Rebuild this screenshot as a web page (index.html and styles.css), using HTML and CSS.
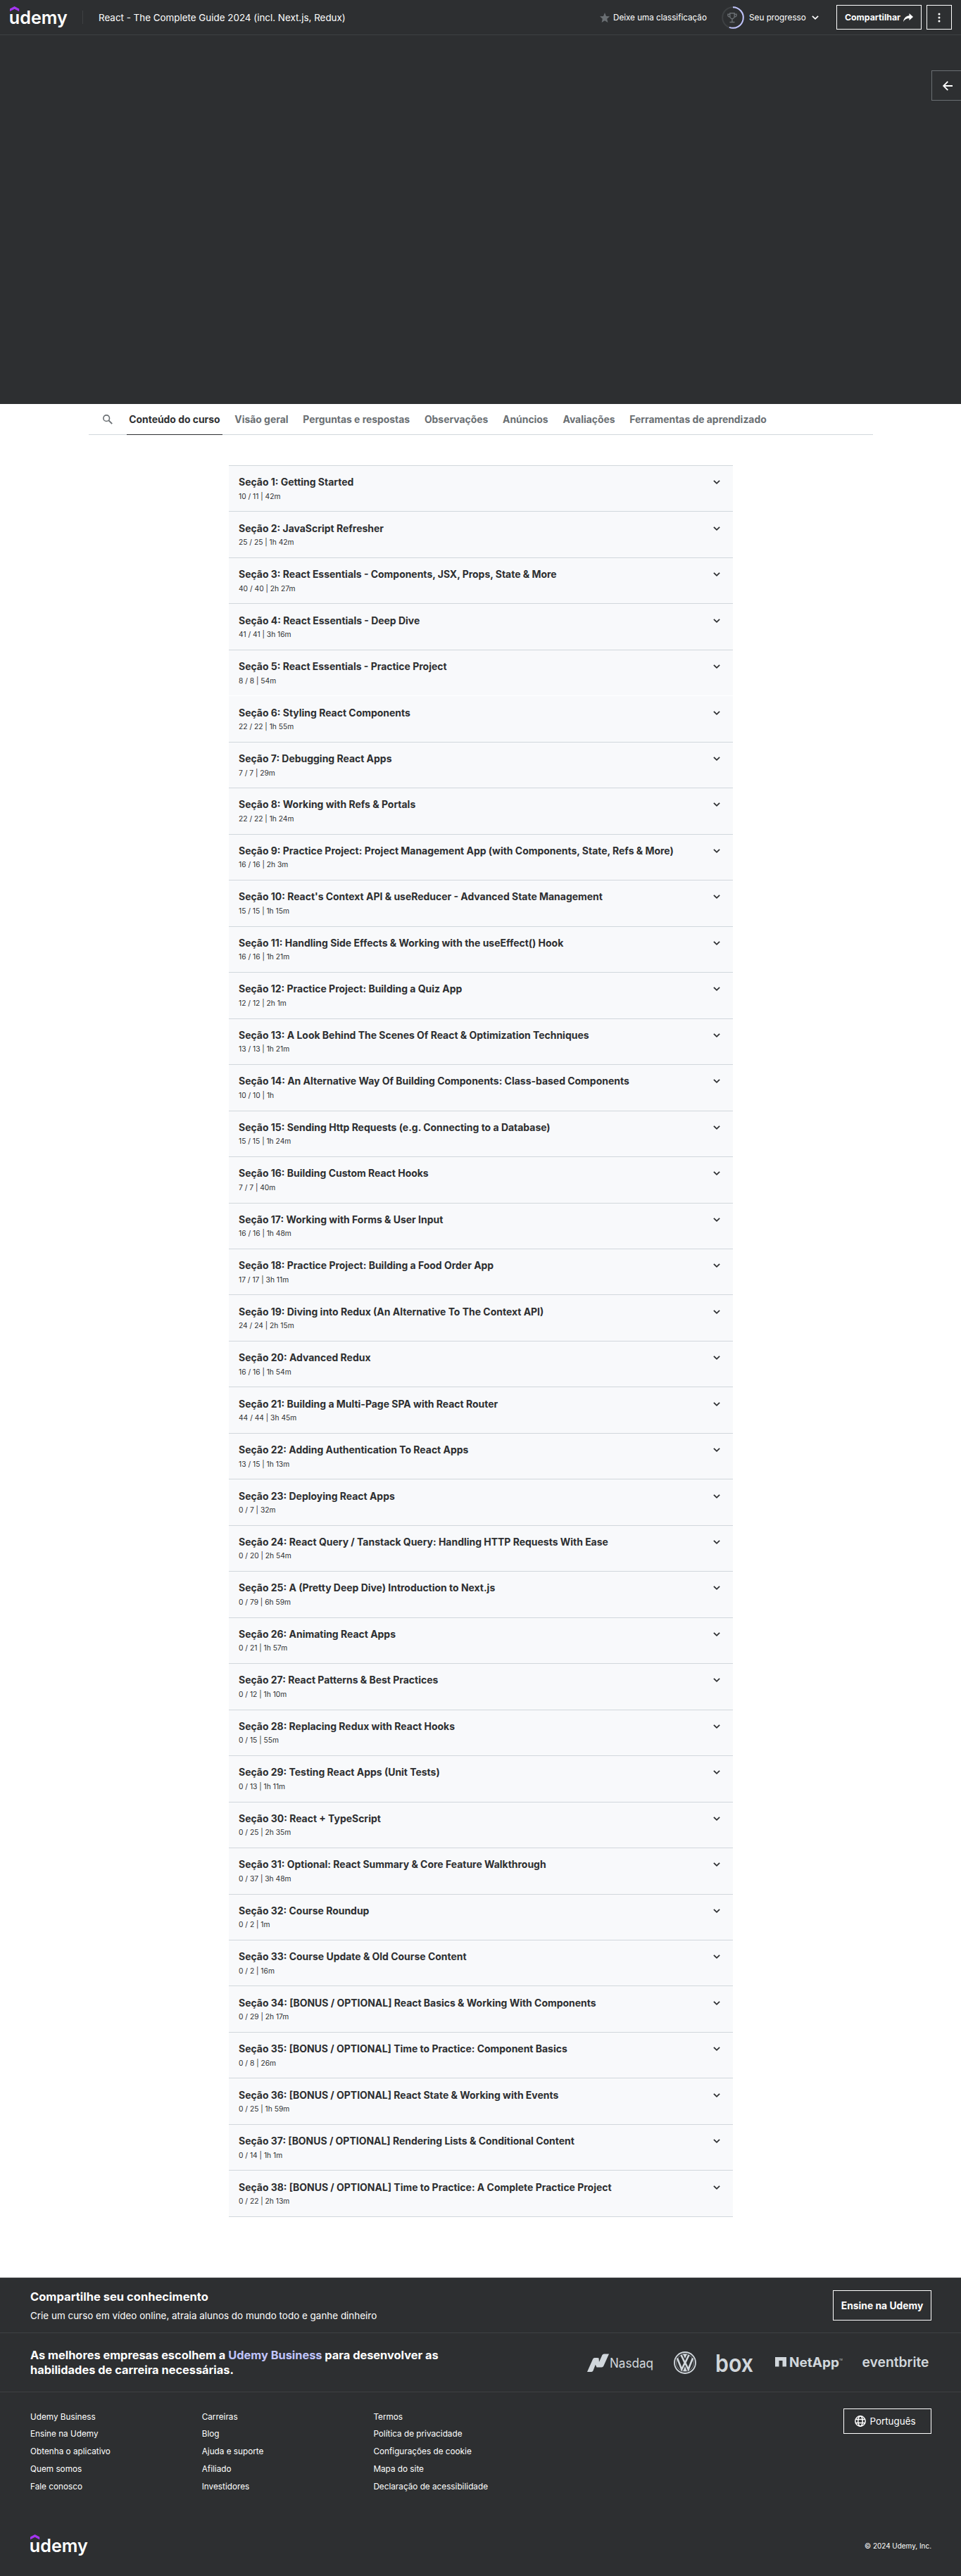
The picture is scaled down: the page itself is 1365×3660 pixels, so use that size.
FILE: index.html
```html
<!DOCTYPE html>
<html lang="pt-BR">
<head>
<meta charset="utf-8">
<title>React - The Complete Guide 2024 (incl. Next.js, Redux) | Udemy</title>
<link rel="stylesheet" href="styles.css">
</head>
<body>
<svg width="0" height="0" class="defs" aria-hidden="true">
  <symbol id="chevron" viewBox="0 0 10 6"><path d="M0.9 0.8 5 4.8 9.1 0.8" fill="none" stroke="currentColor" stroke-width="1.7"/></symbol>
  <symbol id="udemy" viewBox="0 0 82 32" overflow="visible">
    <path d="M0 3.600 6.600 0 13.200 3.600V7.300L6.600 3.700 0 7.300Z" fill="#a435f0"/>
    <text x="-1.200" y="24.600" class="wordmark" font-size="25.500" font-weight="600" textLength="83" lengthAdjust="spacingAndGlyphs">udemy</text>
  </symbol>
</svg>

<header class="header">
  <svg class="logo" width="82" height="32"><use href="#udemy"/></svg>
  <span class="divider"></span>
  <h1 class="course-title">React - The Complete Guide 2024 (incl. Next.js, Redux)</h1>
  <div class="header-actions">
    <span class="rate"><svg width="14" height="14" viewBox="0 0 14 14"><path d="M7 0 9 4.900 14 5.300 10.200 8.700 11.400 14 7 11.200 2.600 14 3.800 8.700 0 5.300 5 4.900Z" fill="#6a6f73"/></svg>Deixe uma classificação</span>
    <span class="progress">
      <svg width="32" height="32" viewBox="0 0 32 32" fill="none">
        <circle cx="16" cy="16" r="14.800" stroke="#3e4143" stroke-width="2"/>
        <path d="M16 1.200A14.800 14.800 0 1 1 10.900 29.900" stroke="#c0c4fc" stroke-width="2"/>
        <path d="M11.800 9.800H18.200V14A3.200 3.600 0 0 1 11.800 14ZM11.800 11.200H8.900V12.500A2.500 2.500 0 0 0 12 15M18.200 11.200H21.100V12.500A2.500 2.500 0 0 1 18 15M15 17.500V21.800M11.500 22.500H18.500" stroke="#6a6f73" stroke-width="1.400"/>
      </svg>
      Seu progresso
      <svg class="chev" width="10" height="6"><use href="#chevron"/></svg>
    </span>
    <a class="btn share">Compartilhar<svg width="14" height="12" viewBox="0 0 14 12"><path d="M8.500 0 14 5 8.500 10V7C4.500 7 2 8.500 0 12 .6 7.500 3 3.800 8.500 3.200Z" fill="#fff"/></svg></a>
    <a class="btn kebab"><svg width="4" height="14" viewBox="0 0 4 14" fill="#fff"><circle cx="2" cy="2" r="1.500"/><circle cx="2" cy="7" r="1.500"/><circle cx="2" cy="12" r="1.500"/></svg></a>
  </div>
</header>

<section class="player">
  <a class="open-sidebar"><svg width="14" height="14" viewBox="0 0 14 14"><path d="M7.300 .8 1.200 7 7.300 13.200M1.500 7H14" fill="none" stroke="#fff" stroke-width="1.800"/></svg></a>
</section>

<nav class="tabs">
  <a class="search"><svg width="14" height="14" viewBox="0 0 14 14" fill="none" stroke="#6a6f73" stroke-width="1.600"><circle cx="5.200" cy="5.200" r="4.300"/><path d="M8.400 8.400 13.200 13.200" stroke-width="1.900"/></svg></a>
  <a class="tab active">Conteúdo do curso</a>
  <a class="tab">Visão geral</a>
  <a class="tab">Perguntas e respostas</a>
  <a class="tab">Observações</a>
  <a class="tab">Anúncios</a>
  <a class="tab">Avaliações</a>
  <a class="tab">Ferramentas de aprendizado</a>
</nav>

<main class="curriculum">
<ul class="sections">
<li><div><h2>Seção 1: Getting Started</h2><p>10 / 11 | 42m</p></div><svg><use href="#chevron"/></svg></li>
<li><div><h2>Seção 2: JavaScript Refresher</h2><p>25 / 25 | 1h 42m</p></div><svg><use href="#chevron"/></svg></li>
<li><div><h2>Seção 3: React Essentials - Components, JSX, Props, State &amp; More</h2><p>40 / 40 | 2h 27m</p></div><svg><use href="#chevron"/></svg></li>
<li><div><h2>Seção 4: React Essentials - Deep Dive</h2><p>41 / 41 | 3h 16m</p></div><svg><use href="#chevron"/></svg></li>
<li class="seamless"><div><h2>Seção 5: React Essentials - Practice Project</h2><p>8 / 8 | 54m</p></div><svg><use href="#chevron"/></svg></li>
<li><div><h2>Seção 6: Styling React Components</h2><p>22 / 22 | 1h 55m</p></div><svg><use href="#chevron"/></svg></li>
<li><div><h2>Seção 7: Debugging React Apps</h2><p>7 / 7 | 29m</p></div><svg><use href="#chevron"/></svg></li>
<li><div><h2>Seção 8: Working with Refs &amp; Portals</h2><p>22 / 22 | 1h 24m</p></div><svg><use href="#chevron"/></svg></li>
<li><div><h2>Seção 9: Practice Project: Project Management App (with Components, State, Refs &amp; More)</h2><p>16 / 16 | 2h 3m</p></div><svg><use href="#chevron"/></svg></li>
<li><div><h2>Seção 10: React's Context API &amp; useReducer - Advanced State Management</h2><p>15 / 15 | 1h 15m</p></div><svg><use href="#chevron"/></svg></li>
<li><div><h2>Seção 11: Handling Side Effects &amp; Working with the useEffect() Hook</h2><p>16 / 16 | 1h 21m</p></div><svg><use href="#chevron"/></svg></li>
<li><div><h2>Seção 12: Practice Project: Building a Quiz App</h2><p>12 / 12 | 2h 1m</p></div><svg><use href="#chevron"/></svg></li>
<li><div><h2>Seção 13: A Look Behind The Scenes Of React &amp; Optimization Techniques</h2><p>13 / 13 | 1h 21m</p></div><svg><use href="#chevron"/></svg></li>
<li><div><h2>Seção 14: An Alternative Way Of Building Components: Class-based Components</h2><p>10 / 10 | 1h</p></div><svg><use href="#chevron"/></svg></li>
<li><div><h2>Seção 15: Sending Http Requests (e.g. Connecting to a Database)</h2><p>15 / 15 | 1h 24m</p></div><svg><use href="#chevron"/></svg></li>
<li><div><h2>Seção 16: Building Custom React Hooks</h2><p>7 / 7 | 40m</p></div><svg><use href="#chevron"/></svg></li>
<li><div><h2>Seção 17: Working with Forms &amp; User Input</h2><p>16 / 16 | 1h 48m</p></div><svg><use href="#chevron"/></svg></li>
<li><div><h2>Seção 18: Practice Project: Building a Food Order App</h2><p>17 / 17 | 3h 11m</p></div><svg><use href="#chevron"/></svg></li>
<li><div><h2>Seção 19: Diving into Redux (An Alternative To The Context API)</h2><p>24 / 24 | 2h 15m</p></div><svg><use href="#chevron"/></svg></li>
<li><div><h2>Seção 20: Advanced Redux</h2><p>16 / 16 | 1h 54m</p></div><svg><use href="#chevron"/></svg></li>
<li><div><h2>Seção 21: Building a Multi-Page SPA with React Router</h2><p>44 / 44 | 3h 45m</p></div><svg><use href="#chevron"/></svg></li>
<li><div><h2>Seção 22: Adding Authentication To React Apps</h2><p>13 / 15 | 1h 13m</p></div><svg><use href="#chevron"/></svg></li>
<li><div><h2>Seção 23: Deploying React Apps</h2><p>0 / 7 | 32m</p></div><svg><use href="#chevron"/></svg></li>
<li><div><h2>Seção 24: React Query / Tanstack Query: Handling HTTP Requests With Ease</h2><p>0 / 20 | 2h 54m</p></div><svg><use href="#chevron"/></svg></li>
<li><div><h2>Seção 25: A (Pretty Deep Dive) Introduction to Next.js</h2><p>0 / 79 | 6h 59m</p></div><svg><use href="#chevron"/></svg></li>
<li><div><h2>Seção 26: Animating React Apps</h2><p>0 / 21 | 1h 57m</p></div><svg><use href="#chevron"/></svg></li>
<li><div><h2>Seção 27: React Patterns &amp; Best Practices</h2><p>0 / 12 | 1h 10m</p></div><svg><use href="#chevron"/></svg></li>
<li><div><h2>Seção 28: Replacing Redux with React Hooks</h2><p>0 / 15 | 55m</p></div><svg><use href="#chevron"/></svg></li>
<li><div><h2>Seção 29: Testing React Apps (Unit Tests)</h2><p>0 / 13 | 1h 11m</p></div><svg><use href="#chevron"/></svg></li>
<li><div><h2>Seção 30: React + TypeScript</h2><p>0 / 25 | 2h 35m</p></div><svg><use href="#chevron"/></svg></li>
<li><div><h2>Seção 31: Optional: React Summary &amp; Core Feature Walkthrough</h2><p>0 / 37 | 3h 48m</p></div><svg><use href="#chevron"/></svg></li>
<li><div><h2>Seção 32: Course Roundup</h2><p>0 / 2 | 1m</p></div><svg><use href="#chevron"/></svg></li>
<li><div><h2>Seção 33: Course Update &amp; Old Course Content</h2><p>0 / 2 | 16m</p></div><svg><use href="#chevron"/></svg></li>
<li><div><h2>Seção 34: [BONUS / OPTIONAL] React Basics &amp; Working With Components</h2><p>0 / 29 | 2h 17m</p></div><svg><use href="#chevron"/></svg></li>
<li><div><h2>Seção 35: [BONUS / OPTIONAL] Time to Practice: Component Basics</h2><p>0 / 8 | 26m</p></div><svg><use href="#chevron"/></svg></li>
<li><div><h2>Seção 36: [BONUS / OPTIONAL] React State &amp; Working with Events</h2><p>0 / 25 | 1h 59m</p></div><svg><use href="#chevron"/></svg></li>
<li><div><h2>Seção 37: [BONUS / OPTIONAL] Rendering Lists &amp; Conditional Content</h2><p>0 / 14 | 1h 1m</p></div><svg><use href="#chevron"/></svg></li>
<li><div><h2>Seção 38: [BONUS / OPTIONAL] Time to Practice: A Complete Practice Project</h2><p>0 / 22 | 2h 13m</p></div><svg><use href="#chevron"/></svg></li>
</ul>
</main>

<footer class="footer">
  <div class="teach">
    <div>
      <h3>Compartilhe seu conhecimento</h3>
      <p>Crie um curso em vídeo online, atraia alunos do mundo todo e ganhe dinheiro</p>
    </div>
    <a class="btn teach-btn">Ensine na Udemy</a>
  </div>
  <div class="business">
    <h3>As melhores empresas escolhem a <a>Udemy Business</a> para desenvolver as<br>habilidades de carreira necessárias.</h3>
    <div class="brands">
      <svg width="94" height="34" viewBox="0 0 94 34">
        <path d="M0 30 8.200 11.500Q9 10 10.500 10H15.500L8.500 28.200Q7.800 30 6 30ZM14 22.500 21.300 6.200Q22.200 4.500 24 4.500H31L23.500 21.300Q22.500 23.500 20.500 23.500H14.500ZM13 12 16.500 10 17.500 22.500 13.500 23.500 11.500 19Z"/>
        <text x="32" y="24" font-size="18" textLength="62" lengthAdjust="spacingAndGlyphs">Nasdaq</text>
      </svg>
      <svg width="32" height="34" viewBox="0 0 32 34">
        <g fill="none" stroke="#d1d7dc"><circle cx="16" cy="17" r="15" stroke-width="1.800"/><circle cx="16" cy="17" r="12.400" stroke-width=".5"/>
        <path d="M10.500 6 16 17.500 21.500 6M5 10.500 11.300 26.500 15.300 18H16.700L20.700 26.500 27 10.500" stroke-width="2.600"/></g>
        <path d="M13 4.500H19L16 11ZM16 22 18.800 29H13.200Z"/>
      </svg>
      <svg width="54" height="34" viewBox="0 0 54 34"><text x="-2" y="30" font-size="33.500" font-weight="600" textLength="54" lengthAdjust="spacingAndGlyphs">box</text></svg>
      <svg width="95" height="34" viewBox="0 0 95 34">
        <path d="M0 9H16V22.500H10.500V14H5.500V22.500H0Z"/>
        <text x="20" y="22.500" font-size="18.500" font-weight="700" textLength="71" lengthAdjust="spacingAndGlyphs">NetApp</text>
        <text x="91" y="13.500" font-size="3">TM</text>
      </svg>
      <svg width="98" height="34" viewBox="0 0 98 34"><text x="-.5" y="22.500" font-size="19.500" font-weight="600" textLength="95" lengthAdjust="spacingAndGlyphs">eventbrite</text></svg>
    </div>
  </div>
  <div class="links">
    <ul><li>Udemy Business</li><li>Ensine na Udemy</li><li>Obtenha o aplicativo</li><li>Quem somos</li><li>Fale conosco</li></ul>
    <ul><li>Carreiras</li><li>Blog</li><li>Ajuda e suporte</li><li>Afiliado</li><li>Investidores</li></ul>
    <ul><li>Termos</li><li>Política de privacidade</li><li>Configurações de cookie</li><li>Mapa do site</li><li>Declaração de acessibilidade</li></ul>
    <a class="btn language"><svg width="16" height="16" viewBox="0 0 16 16" fill="none" stroke="#fff" stroke-width="1.500"><circle cx="8" cy="8" r="7.200"/><ellipse cx="8" cy="8" rx="3.200" ry="7.200"/><path d="M1.300 5.600H14.700M1.300 10.400H14.700"/></svg>Português</a>
  </div>
  <div class="legal">
    <svg width="82" height="32"><use href="#udemy"/></svg>
    <p>© 2024 Udemy, Inc.</p>
  </div>
</footer>
</body>
</html>
```
FILE: styles.css
```css
* { box-sizing: border-box; margin: 0; padding: 0; }
body { font-family: Inter, "Liberation Sans", sans-serif; font-size: 14px; color: #2d2f31; background: #fff; }
ul { list-style: none; }
svg { display: block; flex: none; overflow: visible; }
.defs { position: absolute; }
.wordmark { font-family: Inter, sans-serif; fill: #fff; }

.btn { display: flex; align-items: center; justify-content: center; border: 1px solid #fff; color: #fff; font-weight: 700; white-space: nowrap; }

.header { display: flex; align-items: center; height: 50px; padding: 0 13px 0 14px; background: #2d2f31; border-bottom: 1px solid #3e4143; color: #fff; }
.divider { width: 1px; height: 19px; margin: 0 22px 0 21px; background: #3e4143; }
.course-title { font-size: 13.4px; font-weight: 400; white-space: nowrap; }
.header-actions { display: flex; align-items: center; margin-left: auto; }
.rate { display: flex; align-items: center; gap: 5px; width: 173px; font-size: 11.65px; white-space: nowrap; }
.progress { display: flex; align-items: center; gap: 7px; width: 163px; font-size: 11.75px; white-space: nowrap; }
.chev { margin-left: 1px; }
.share { width: 121px; height: 35px; gap: 4px; margin-right: 7px; font-size: 12.3px; }
.kebab { width: 36px; height: 35px; }

.player { display: flex; justify-content: flex-end; height: 524px; padding-top: 50px; background: #2d2f31; }
.open-sidebar { display: flex; align-items: center; width: 42px; height: 43px; padding-left: 15px; border: 1px solid #6a6f73; border-right: 0; }

.tabs { display: flex; gap: 13.8px; width: 1114px; height: 44px; margin: 0 auto 43px 126px; border-bottom: 1px solid #d1d7dc; }
.search { display: flex; align-items: center; width: 40px; padding-left: 20px; }
.tab { display: flex; align-items: center; height: 44px; padding: 0 3.5px; border-bottom: 1px solid #d1d7dc; font-size: 13.9px; font-weight: 700; color: #6a6f73; white-space: nowrap; }
.tab.active { color: #2d2f31; border-color: #2d2f31; }

.curriculum { width: 716px; height: 2575px; margin: 0 auto 0 325px; }
.sections { border-top: 1px solid #d1d7dc; }
.sections li { display: flex; justify-content: space-between; height: 65.48px; padding: 13.2px 18px 0 14px; background: #f8f9fb; border-bottom: 1px solid #d1d7dc; }
.sections li.seamless { border-color: #fff; }
.sections h2 { font-size: 13.96px; line-height: 20px; font-weight: 700; white-space: nowrap; }
.sections p { margin-top: 1.5px; font-size: 10.25px; line-height: 16px; }
.sections svg { width: 10px; height: 6px; margin-top: 7px; }

.footer { height: 424px; background: #2d2f31; border-top: 1px solid #3e4143; color: #fff; }
.teach, .business { display: flex; justify-content: space-between; align-items: center; padding: 0 42px 0 43px; border-bottom: 1px solid #3e4143; }
.teach { height: 78px; }
.teach h3 { font-size: 16.55px; line-height: 22px; }
.teach p { margin-top: 6px; font-size: 13.45px; line-height: 20px; }
.teach-btn { width: 140px; height: 43px; font-size: 13.85px; }
.business { height: 84px; }
.business h3 { font-size: 16.38px; line-height: 21px; white-space: nowrap; }
.business a { color: #c0c4fc; }
.brands { display: flex; align-items: center; gap: 29px; fill: #d1d7dc; }
.links { display: flex; height: 190px; padding: 22.5px 42px 0 43px; font-size: 11.75px; }
.links ul { width: 243.7px; }
.links li { height: 24.8px; line-height: 25px; white-space: nowrap; }
.language { width: 125px; height: 36px; margin-left: auto; gap: 5px; padding-right: 6px; font-size: 13.4px; font-weight: 400; }
.legal { display: flex; justify-content: space-between; align-items: center; height: 56px; padding: 0 42px 0 43px; font-size: 9.93px; }
```
